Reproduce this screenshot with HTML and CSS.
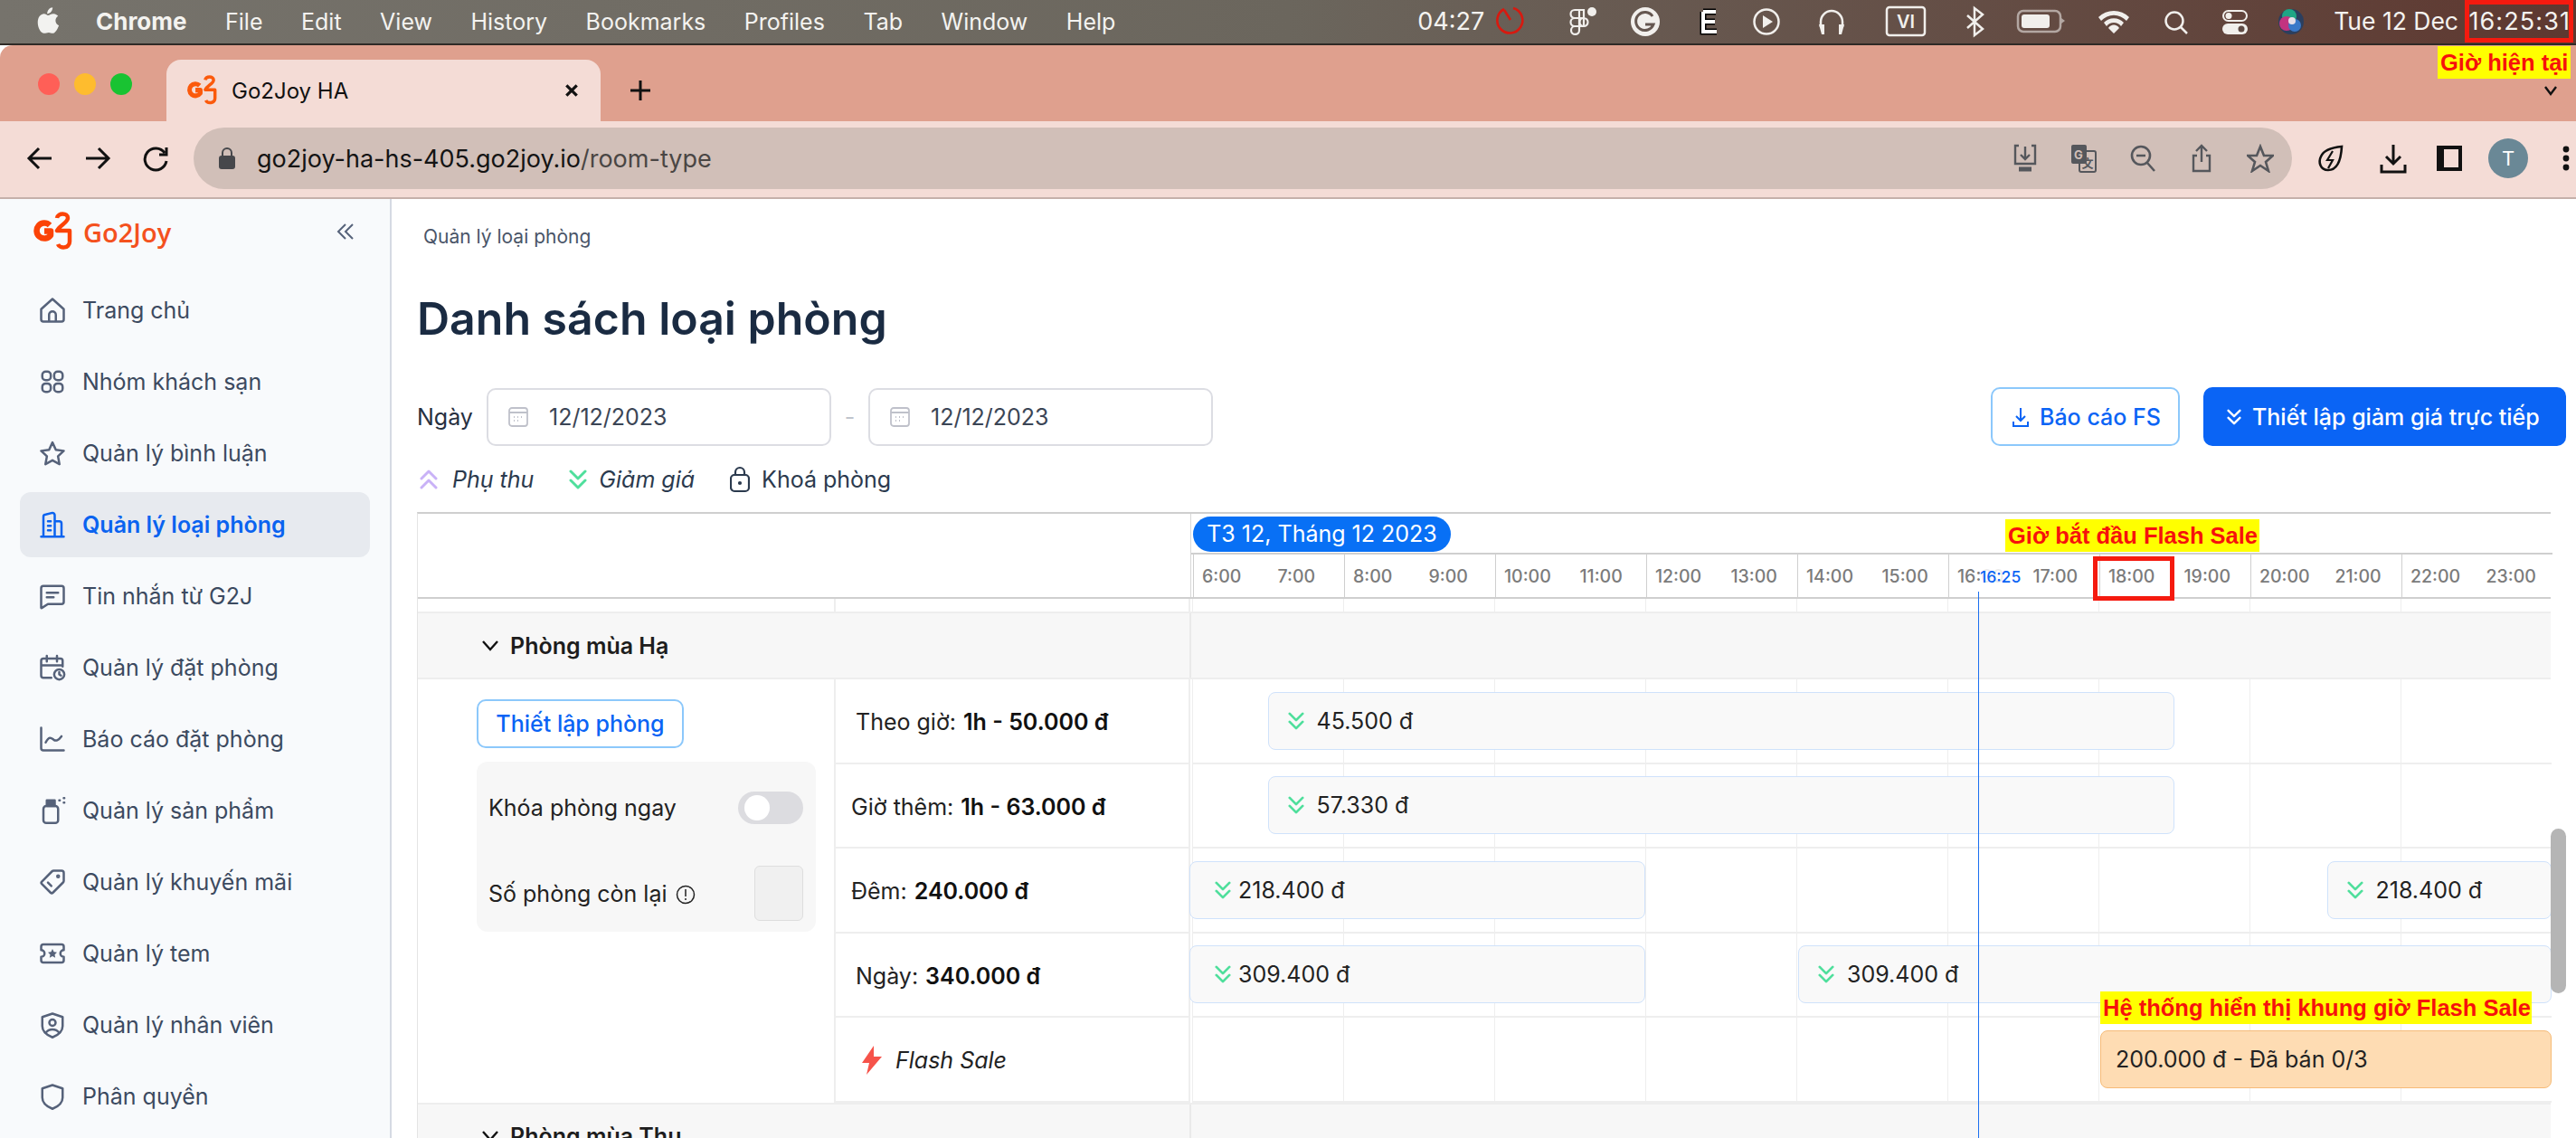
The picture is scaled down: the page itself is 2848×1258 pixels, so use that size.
FILE: index.html
```html
<!DOCTYPE html>
<html lang="en">
<head>
    <meta charset="UTF-8">
    <title>Go2Joy HA</title>
    <link rel="stylesheet" href="styles.css">
</head>
<body>
    <svg class="defs" width="0" height="0">
        <symbol id="down2" viewBox="0 0 20 24"><path d="M2 3l8 8 8-8M2 13l8 8 8-8" fill="none" stroke="currentColor" stroke-width="3" stroke-linecap="round" stroke-linejoin="round"/></symbol>
        <symbol id="g2" viewBox="0 0 44 44">
            <path d="M19 15A8.500 8.500 0 1 0 20 26V21.500H13" fill="none" stroke="currentColor" stroke-width="6.500" stroke-linejoin="round"/>
            <path d="M27 7C28 1 39 1 39 7C39 12 30 15 27 21H41V33C41 41 30 41 28 36" fill="none" stroke="currentColor" stroke-width="4.500" stroke-linejoin="round"/>
        </symbol>
    </svg>

    <div class="menubar">
        <svg class="apple" width="26" height="32" viewBox="0 0 30 36"><path d="M21 1c0 4-3 8-7 8 0-4 3-8 7-8zM15 11c2 0 4-2 7-2 3 0 5 2 6 3-5 3-4 10 1 12-2 5-5 10-8 10-2 0-3-1-5-1s-4 1-6 1C6 34 2 27 2 20c0-7 4-11 8-11 2 0 4 2 5 2z" fill="#f2f2f0"/></svg>
        <nav class="menu">
            <b>Chrome</b><span>File</span><span>Edit</span><span>View</span><span>History</span><span>Bookmarks</span><span>Profiles</span><span>Tab</span><span>Window</span><span>Help</span>
        </nav>
        <div class="tray">
            <span class="tray-clock">04:27</span>
            <svg class="tray-icons" width="905" height="46" viewBox="0 0 905 46" fill="none" stroke="#f1efec" stroke-width="2.500">
                <g stroke="#d8190f" stroke-width="2.600"><path d="M25 9a14 14 0 1 1-10 1M15 11l7 11"/></g>
                <g transform="translate(87 8)" stroke-width="2.200"><circle cx="25" cy="5" r="5" fill="#f1efec" stroke="none"/><path d="M6 3h10v9H6a4.500 4.500 0 0 1 0-9zM6 12h10v9H6a4.500 4.500 0 0 1 0-9zM6 21h5v4.500a4.500 4.500 0 1 1-5-4.500zM11 3v18M16 12a4.500 4.500 0 1 1 0 9 4.500 4.500 0 0 1 0-9z"/></g>
                <g transform="translate(171 24)"><circle r="16" fill="#f1efec" stroke="none"/><path d="M8-6a10 10 0 1 0 1 9H0" stroke="#655750" stroke-width="3"/></g>
                <g transform="translate(233 11)"><path d="M2 2h14M2 2v22h15M2 13h13" stroke="#000" stroke-width="7"/><path d="M2 2h14M2 2v22h15M2 13h13" stroke="#fff" stroke-width="4"/></g>
                <g transform="translate(305 24)"><circle r="13.500"/><path d="M-4-7l11 7-11 7z" fill="#f1efec" stroke="none"/></g>
                <g transform="translate(363 0)"><path d="M2 30V24a12 12 0 0 1 24 0v6"/><path d="M0 27h6v11H3zM22 27h6l-3 11h-3z" fill="#f1efec" stroke="none"/></g>
                <rect x="438" y="8" width="42" height="31" rx="3"/><text x="459" y="31" class="tray-vi">VI</text>
                <path d="M527 17l17 15-9 7V9l9 7-17 15"/>
                <g transform="translate(583 12)"><rect width="47" height="23" rx="6" stroke="#b3a7a2"/><rect x="4" y="4" width="31" height="15" rx="3" fill="#f1efec" stroke="none"/><path d="M48 8l4 3-4 3z" fill="#b3a7a2" stroke="none"/></g>
                <g transform="translate(689 0)" stroke="none" fill="#f1efec"><path d="M-17 19a24 24 0 0 1 34 0l-3 4a19 19 0 0 0-28 0zM-11 25a15 15 0 0 1 22 0l-3 4a10 10 0 0 0-16 0zM-6 31a7 7 0 0 1 12 0l-6 6z"/></g>
                <circle cx="756" cy="23" r="9.500"/><path d="M763 30l7 7"/>
                <g transform="translate(809 11)"><rect x="1" y="1" width="26" height="11" rx="5.500" stroke-width="2"/><circle cx="7" cy="6.500" r="3.500" fill="#f1efec" stroke="none"/><rect y="15" width="28" height="12" rx="6" fill="#f1efec" stroke="none"/><circle cx="21" cy="21" r="3.500" fill="#5f4a44" stroke="none"/></g>
                <g transform="translate(885 24)" stroke="none"><circle r="14" fill="#2b3f5f"/><circle cx="-2" cy="-6" r="8" fill="#1fa585"/><circle cx="-5" cy="2" r="8" fill="#c23480"/><circle cx="4" cy="4" r="7" fill="#3a78c8"/><circle cx="1" cy="-1" r="4" fill="#e6dfe8"/></g>
            </svg>
            <span class="tray-date">Tue 12 Dec</span>
            <span class="tray-time">16:25:31</span>
        </div>
    </div>

    <div class="browser">
        <div class="tabstrip">
            <div class="lights"><i class="red"></i><i class="yellow"></i><i class="green"></i></div>
            <div class="tab">
                <svg class="favicon" width="34" height="34"><use href="#g2"/></svg>
                <span class="tab-title">Go2Joy HA</span>
                <svg width="16" height="16" viewBox="0 0 14 14"><path d="M2 2l10 10M12 2L2 12" stroke="#111" stroke-width="2.800"/></svg>
            </div>
            <svg class="newtab" width="26" height="26" viewBox="0 0 26 26"><path d="M13 2v22M2 13h22" stroke="#111" stroke-width="3"/></svg>
            <svg class="tabmenu" width="16" height="12" viewBox="0 0 16 12"><path d="M2 2l6 8 6-8" fill="none" stroke="#111" stroke-width="2.400"/></svg>
        </div>
        <div class="toolbar">
            <svg width="30" height="30" viewBox="0 0 30 30" fill="none" stroke="#111" stroke-width="3"><path d="M28 15H4M14 4L3 15l11 11"/></svg>
            <svg width="30" height="30" viewBox="0 0 30 30" fill="none" stroke="#111" stroke-width="3"><path d="M2 15h24M16 4l11 11-11 11"/></svg>
            <svg width="30" height="30" viewBox="0 0 30 30" fill="none" stroke="#111" stroke-width="3"><path d="M25 9a12 12 0 1 0 2 9M27 3v8h-8"/></svg>
            <div class="address">
                <svg width="18" height="24" viewBox="0 0 18 24"><rect y="9" width="18" height="15" rx="3" fill="#46474b"/><path d="M4 10V6a5 5 0 0 1 10 0v4" fill="none" stroke="#46474b" stroke-width="2"/></svg>
                <span class="url">go2joy-ha-hs-405.go2joy.io<em>/room-type</em></span>
                <div class="address-icons">
                    <svg width="30" height="32" viewBox="0 0 30 32" fill="none" stroke="#55575c" stroke-width="2.400"><path d="M8 2H4v20h22V2h-4M15 3v13M10 12l5 5 5-5"/><path d="M8 28h14" stroke-width="5"/></svg>
                    <svg width="30" height="32" viewBox="0 0 30 32"><rect x="1" y="1" width="17" height="21" rx="2" fill="#55575c"/><rect x="10" y="8" width="18" height="23" rx="2" fill="none" stroke="#55575c" stroke-width="2"/><text x="9" y="17" class="gt">G</text><text x="19" y="26" class="gt dark">文</text></svg>
                    <svg width="30" height="32" viewBox="0 0 30 32" fill="none" stroke="#55575c" stroke-width="2.600"><circle cx="13" cy="13" r="10"/><path d="M20 21l8 9M8 13h10"/></svg>
                    <svg width="30" height="32" viewBox="0 0 30 32" fill="none" stroke="#55575c" stroke-width="2.400"><path d="M15 20V2M9 8l6-6 6 6M10 13H6v17h18V13h-4"/></svg>
                    <svg width="30" height="32" viewBox="0 0 30 32" fill="none" stroke="#55575c" stroke-width="2.600"><path d="M15 3l4 10h10l-8 7 3 10-9-6-9 6 3-10-8-7h10z"/></svg>
                </div>
            </div>
            <div class="browser-icons">
                <svg width="30" height="32" viewBox="0 0 30 32" fill="none" stroke="#111" stroke-width="2.600"><path d="M27 3c-1 18-6 26-15 26-9 0-11-9-8-15 3-7 12-10 23-11z"/><path d="M17 8l-6 10h6l-5 9" stroke-width="2.200"/></svg>
                <svg width="30" height="34" viewBox="0 0 30 34" fill="none" stroke="#111" stroke-width="3"><path d="M15 2v21M7 15l8 8 8-8M2 24v8h26v-8"/></svg>
                <svg class="panel-icon" width="28" height="28" viewBox="0 0 28 28"><path d="M0 0h28v28H0zM8 4v20h16V4z" fill="#111" fill-rule="evenodd"/></svg>
                <span class="avatar">T</span>
                <svg class="dots" width="8" height="28" viewBox="0 0 8 28"><circle cx="4" cy="4" r="3.400" fill="#111"/><circle cx="4" cy="14" r="3.400" fill="#111"/><circle cx="4" cy="24" r="3.400" fill="#111"/></svg>
            </div>
        </div>
    </div>

    <div class="app">
        <aside class="sidebar">
            <div class="brand">
                <svg class="brand-logo" width="44" height="44"><use href="#g2"/></svg>
                <span class="brand-name">Go2Joy</span>
                <svg class="collapse" width="20" height="20" viewBox="0 0 20 20" fill="none" stroke="#56627a" stroke-width="2"><path d="M10 2L2 10l8 8M18 2l-8 8 8 8"/></svg>
            </div>
            <nav>
                <a class="nav-item"><svg viewBox="0 0 24 24"><path d="M2 11l10-9 10 9v9a2 2 0 0 1-2 2H4a2 2 0 0 1-2-2zM9 22v-6a3 3 0 0 1 6 0v6"/></svg>Trang chủ</a>
                <a class="nav-item"><svg viewBox="0 0 24 24"><rect x="3" y="3" width="7.500" height="7.500" rx="3"/><rect x="13.500" y="3" width="7.500" height="7.500" rx="3"/><rect x="3" y="13.500" width="7.500" height="7.500" rx="3"/><rect x="13.500" y="13.500" width="7.500" height="7.500" rx="3"/></svg>Nhóm khách sạn</a>
                <a class="nav-item"><svg viewBox="0 0 24 24"><path d="M12 2.500l3 6.500 7 .9-5.100 4.800 1.300 7L12 18.300 5.800 21.700l1.300-7L2 9.900l7-.9z"/></svg>Quản lý bình luận</a>
                <a class="nav-item active"><svg viewBox="0 0 24 24"><path d="M2 22.500h20M4 22V5a2 2 0 0 1 2-2l6-1.500c1 0 2 1 2 2V22M14 9h4a2 2 0 0 1 2 2v11M8 9h2.500M8 13h2.500M8 17h2.500"/></svg>Quản lý loại phòng</a>
                <a class="nav-item"><svg viewBox="0 0 24 24"><path d="M4 3h16a2 2 0 0 1 2 2v12a2 2 0 0 1-2 2H8l-5.500 3.500a.4.4 0 0 1-.5-.3V5a2 2 0 0 1 2-2zM7 9h10M7 13h6"/></svg>Tin nhắn từ G2J</a>
                <a class="nav-item"><svg viewBox="0 0 24 24"><path d="M11 21H4a2 2 0 0 1-2-2V6a2 2 0 0 1 2-2h15a2 2 0 0 1 2 2v5M7 1.500v5M16 1.500v5M2 10h19"/><circle cx="18" cy="18" r="4.500"/><path d="M18 16v2l1.500 1"/></svg>Quản lý đặt phòng</a>
                <a class="nav-item"><svg viewBox="0 0 24 24"><path d="M2 2v18a2 2 0 0 0 2 2h18M6 15c3-6 5-4 7-2.500s4 1 7-3"/></svg>Báo cáo đặt phòng</a>
                <a class="nav-item"><svg viewBox="0 0 24 24"><rect x="4" y="8" width="13" height="15" rx="2.500"/><path d="M7 3h7v5H7z" fill="currentColor"/><path d="M18 3h.5M22 1h.5M22 5h.5"/></svg>Quản lý sản phẩm</a>
                <a class="nav-item"><svg viewBox="0 0 24 24"><path d="M13 2h7a2 2 0 0 1 2 2v7a2 2 0 0 1-.6 1.400l-9 9a1.500 1.500 0 0 1-2.100 0L2.600 13.700a1.500 1.500 0 0 1 0-2.100l9-9A2 2 0 0 1 13 2zM8 12.500l3 3"/><circle cx="17" cy="7" r=".8"/></svg>Quản lý khuyến mãi</a>
                <a class="nav-item"><svg viewBox="0 0 24 24"><path d="M4 4h16a2 2 0 0 1 2 2v3a3 3 0 0 0 0 6v3a2 2 0 0 1-2 2H4a2 2 0 0 1-2-2v-3a3 3 0 0 0 0-6V6a2 2 0 0 1 2-2z"/><path d="M12 8l1.300 2.600 2.700.3-2 2 .5 2.800-2.500-1.400-2.500 1.400.5-2.800-2-2 2.700-.3z" fill="currentColor" stroke="none"/></svg>Quản lý tem</a>
                <a class="nav-item"><svg viewBox="0 0 24 24"><path d="M12 2l9 3v8c0 5-4 8-9 10-5-2-9-5-9-10V5z"/><circle cx="12" cy="10" r="2.800"/><path d="M6 19c3-4 9-4 12 0"/></svg>Quản lý nhân viên</a>
                <a class="nav-item"><svg viewBox="0 0 24 24"><path d="M12 2l9 3v8c0 5-4 8-9 10-5-2-9-5-9-10V5z"/></svg>Phân quyền</a>
            </nav>
        </aside>

        <main class="content">
            <div class="breadcrumb">Quản lý loại phòng</div>
            <h1>Danh sách loại phòng</h1>

            <div class="filters">
                <label>Ngày</label>
                <div class="date-input"><svg width="22" height="22" viewBox="0 0 22 22" fill="none" stroke="#bfc1ca" stroke-width="1.800"><rect x="1" y="1" width="20" height="20" rx="3"/><path d="M1 6h20M6 11h1M10 11h1M14 11h1M6 15h1M10 15h1"/></svg>12/12/2023</div>
                <span class="dash">-</span>
                <div class="date-input"><svg width="22" height="22" viewBox="0 0 22 22" fill="none" stroke="#bfc1ca" stroke-width="1.800"><rect x="1" y="1" width="20" height="20" rx="3"/><path d="M1 6h20M6 11h1M10 11h1M14 11h1M6 15h1M10 15h1"/></svg>12/12/2023</div>
                <div class="actions">
                    <button class="btn btn-outline"><svg width="18" height="24" viewBox="0 0 18 24" fill="none" stroke="currentColor" stroke-width="2"><path d="M9 2v14M4 11l5 5 5-5M1 17v5h16v-5"/></svg>Báo cáo FS</button>
                    <button class="btn btn-primary"><svg width="16" height="20"><use href="#down2"/></svg>Thiết lập giảm giá trực tiếp</button>
                </div>
            </div>

            <div class="legend">
                <span class="legend-item up"><svg width="20" height="26" viewBox="0 0 20 24"><path d="M2 11l8-8 8 8M2 21l8-8 8 8" fill="none" stroke="#c9b2f7" stroke-width="3" stroke-linecap="round" stroke-linejoin="round"/></svg><i>Phụ thu</i></span>
                <span class="legend-item"><svg class="green-icon" width="20" height="26"><use href="#down2"/></svg><i>Giảm giá</i></span>
                <span class="legend-item"><svg width="22" height="30" viewBox="0 0 22 30" fill="none" stroke="#2b3a4e" stroke-width="2.200"><rect x="1" y="10" width="20" height="18" rx="4"/><path d="M6 10V7a5 5 0 0 1 10 0v3"/><circle cx="11" cy="19" r="1" fill="#2b3a4e"/></svg>Khoá phòng</span>
            </div>

            <section class="schedule">
                <div class="head">
                    <div class="head-blank"></div>
                    <div class="head-time">
                        <div class="head-date"><span class="date-pill">T3 12, Tháng 12 2023</span></div>
                        <div class="hours" id="hours"></div>
                    </div>
                </div>
                <div class="spacer"><div class="cell-a"></div><div class="cell-b"></div><div class="grid-lines"></div></div>

                <div class="group"><svg width="20" height="14" viewBox="0 0 20 14"><path d="M2 2l8 9 8-9" fill="none" stroke="#111" stroke-width="2.400"/></svg>Phòng mùa Hạ</div>
                <div class="room">
                    <div class="room-info">
                        <button class="btn-setup">Thiết lập phòng</button>
                        <div class="room-panel">
                            <div class="panel-row">Khóa phòng ngay<span class="toggle"><i></i></span></div>
                            <div class="panel-row"><span>Số phòng còn lại <svg class="info" width="22" height="22" viewBox="0 0 22 22" fill="none" stroke="#222" stroke-width="1.500"><circle cx="11" cy="11" r="9.500"/><path d="M11 5v8M11 15v2"/></svg></span><span class="count"></span></div>
                        </div>
                    </div>

                    <div class="rate rate-a">Theo giờ: <b>1h - 50.000 đ</b></div>
                    <div class="track"><div class="bar s7-19"><svg width="18" height="22"><use href="#down2"/></svg>45.500 đ</div></div>

                    <div class="rate">Giờ thêm: <b>1h - 63.000 đ</b></div>
                    <div class="track"><div class="bar s7-19"><svg width="18" height="22"><use href="#down2"/></svg>57.330 đ</div></div>

                    <div class="rate">Đêm: <b>240.000 đ</b></div>
                    <div class="track"><div class="bar s6-12"><svg width="18" height="22"><use href="#down2"/></svg>218.400 đ</div><div class="bar s21-24"><svg width="18" height="22"><use href="#down2"/></svg>218.400 đ</div></div>

                    <div class="rate rate-a">Ngày: <b>340.000 đ</b></div>
                    <div class="track"><div class="bar s6-12"><svg width="18" height="22"><use href="#down2"/></svg>309.400 đ</div><div class="bar s14-24"><svg width="18" height="22"><use href="#down2"/></svg>309.400 đ</div></div>

                    <div class="rate rate-flash"><svg width="24" height="32" viewBox="0 0 24 32"><path d="M14 0L1 19h8l-3 13 17-20h-9z" fill="#f6534a"/></svg><i>Flash Sale</i></div>
                    <div class="track"><div class="bar bar-flash s18-24">200.000 đ - Đã bán 0/3</div></div>
                </div>
                <div class="group"><svg width="20" height="14" viewBox="0 0 20 14"><path d="M2 2l8 9 8-9" fill="none" stroke="#111" stroke-width="2.400"/></svg>Phòng mùa Thu</div>

                <div class="now-line"></div>
                <span class="now-label">16:25</span>
            </section>
        </main>
        <div class="scrollbar"></div>
    </div>

    <span class="note note-now">Giờ hiện tại</span>
    <span class="note note-start">Giờ bắt đầu Flash Sale</span>
    <span class="note note-system">Hệ thống hiển thị khung giờ Flash Sale</span>
    <div class="mark mark-clock"></div>
    <div class="mark mark-hour"></div>

    <script>
        // 6:00 -> 23:00 labels for the timeline header
        let hours = document.getElementById("hours");
        for (let h = 6; h < 24; h++) {
            let label = document.createElement("span");
            label.textContent = h + ":00";
            hours.appendChild(label);
        }
    </script>
</body>
</html>
```

FILE: styles.css
```css
* {
    box-sizing: border-box;
}

html, body {
    margin: 0;
    height: 1258px;
    overflow: hidden;
}

body {
    position: relative;
    font-family: Inter, "Noto Sans", sans-serif;
    background: #fff;
    color: #222;
}

.defs {
    position: absolute;
}

/* mac menu bar */
.menubar {
    height: 50px;
    display: flex;
    align-items: center;
    padding-bottom: 2px;
    background: linear-gradient(90deg, #76736c 0%, #6b665d 50%, #5e3830 100%);
    border-bottom: 2px solid #2f2a26;
    color: #f4f3f0;
    font-size: 25px;
}

.apple {
    margin-left: 40px;
    flex: none;
}

.menu {
    display: flex;
    align-items: baseline;
    gap: 42.5px;
    margin-left: 40px;
}

.menu b {
    font-size: 26px;
    font-weight: 700;
}

.tray {
    margin-left: auto;
    display: flex;
    align-items: center;
    font-size: 27px;
}

.tray-icons {
    margin-left: 7px;
    flex: none;
}

.tray-vi {
    font-size: 20px;
    font-weight: 600;
    fill: #f1efec;
    stroke: none;
    text-anchor: middle;
}

.gt {
    font-size: 13px;
    font-weight: 700;
    fill: #d1bfb8;
    text-anchor: middle;
}

.gt.dark {
    fill: #55575c;
    font-family: "Noto Sans CJK SC", sans-serif;
}

.tray-date {
    margin-left: 27px;
    font-size: 26.5px;
}

.tray-time {
    width: 130px;
    padding-right: 6px;
    text-align: right;
    letter-spacing: 1.1px;
}

/* browser chrome */
.tabstrip {
    height: 84px;
    display: flex;
    align-items: flex-end;
    background: #dfa08e;
    border-radius: 14px 0 0 0;
    position: relative;
}

.lights {
    display: flex;
    gap: 16px;
    align-self: flex-start;
    margin: 31px 0 0 42px;
}

.lights i {
    width: 24px;
    height: 24px;
    border-radius: 50%;
}

.red { background: #ff5f57; }
.yellow { background: #febc2e; }
.green { background: #19c332; }

.tab {
    width: 480px;
    height: 68px;
    margin-left: 38px;
    padding: 0 24px 0 22px;
    display: flex;
    align-items: center;
    background: #f4dcd6;
    border-radius: 16px 16px 0 0;
    color: #111;
}

.favicon {
    color: #fb5a0c;
    margin-right: 16px;
}

.tab-title {
    flex: 1;
    font-size: 24px;
}

.newtab {
    margin: 0 0 21px 31px;
}

.tabmenu {
    position: absolute;
    right: 20px;
    top: 44px;
}

.toolbar {
    height: 86px;
    display: flex;
    align-items: center;
    gap: 34px;
    padding: 0 0 2px 29px;
    background: #f4dcd6;
    border-bottom: 2px solid #c5b0aa;
}

.toolbar > svg {
    flex: none;
}

.address {
    flex: none;
    width: 2320px;
    height: 68px;
    margin-left: -7px;
    padding-left: 28px;
    display: flex;
    align-items: center;
    gap: 24px;
    background: #d1bfb8;
    border-radius: 34px;
}

.url {
    font-size: 27px;
    color: #141414;
}

.url em {
    font-style: normal;
    color: #4a4644;
}

.address-icons {
    margin-left: auto;
    padding-right: 20px;
    display: flex;
    gap: 35px;
}

.browser-icons {
    display: flex;
    align-items: center;
    gap: 39px;
    margin-left: -6px;
}

.panel-icon {
    margin-left: -6px;
}

.avatar {
    width: 44px;
    height: 44px;
    margin-left: -10px;
    border-radius: 50%;
    background: #6a8896;
    color: #fff;
    font-size: 22px;
    display: flex;
    align-items: center;
    justify-content: center;
}

.dots {
    margin-left: -1px;
}

/* app */
.app {
    display: flex;
    height: 1038px;
    position: relative;
    overflow: hidden;
}

.sidebar {
    width: 433px;
    flex: none;
    background: #f8fafc;
    border-right: 2px solid #d5dae3;
    padding: 0 22px;
}

.brand {
    height: 87px;
    padding: 0 0 15px 14px;
    display: flex;
    align-items: center;
}

.brand-logo {
    color: #fb4307;
}

.brand-name {
    margin-left: 12px;
    font-family: "Open Sans", sans-serif;
    font-size: 29px;
    font-weight: 600;
    color: #f4511e;
}

.collapse {
    margin-left: auto;
    margin-right: 17px;
}

.nav-item {
    height: 72px;
    margin-bottom: 7px;
    padding-left: 21px;
    display: flex;
    align-items: center;
    gap: 18px;
    border-radius: 12px;
    font-size: 25px;
    color: #3c4a60;
}

.nav-item svg {
    width: 30px;
    height: 30px;
    fill: none;
    stroke: #56627a;
    stroke-width: 2;
    stroke-linecap: round;
    stroke-linejoin: round;
    color: #56627a;
}

.nav-item.active {
    background: #e7eaef;
    color: #0a63f0;
    font-weight: 600;
}

.nav-item.active svg {
    stroke: #0a63f0;
}

.content {
    flex: 1;
    min-width: 0;
    padding: 28px 11px 0 28px;
}

.breadcrumb {
    height: 28px;
    padding-left: 7px;
    font-size: 21px;
    line-height: 28px;
    color: #4a5568;
}

h1 {
    height: 60px;
    margin: 46px 0 0;
    font-size: 50px;
    line-height: 60px;
    font-weight: 600;
    color: #1a2b42;
}

.filters {
    height: 65px;
    margin-top: 46px;
    display: flex;
    align-items: center;
    font-size: 25px;
    color: #27303f;
}

.filters label {
    width: 77px;
}

.date-input {
    width: 381px;
    height: 64px;
    padding-left: 22px;
    display: flex;
    align-items: center;
    gap: 23px;
    border: 2px solid #dcdde3;
    border-radius: 10px;
    color: #3b4555;
}

.dash {
    width: 41px;
    text-align: center;
    color: #bfc4cc;
}

.actions {
    margin-left: auto;
    display: flex;
    gap: 26px;
}

.btn {
    height: 65px;
    display: flex;
    align-items: center;
    gap: 12px;
    border-radius: 10px;
    font: 500 25px Inter, sans-serif;
}

.btn-outline {
    width: 209px;
    padding-left: 22px;
    background: #fff;
    border: 2px solid #8cc8fb;
    color: #0a64f5;
}

.btn-primary {
    width: 401px;
    padding-left: 26px;
    background: #0a64f5;
    border: none;
    color: #fff;
}

.legend {
    height: 36px;
    margin-top: 19px;
    padding-left: 3px;
    display: flex;
    gap: 39px;
    font-size: 25px;
    color: #2b3a4e;
}

.legend-item {
    display: flex;
    align-items: center;
    gap: 13px;
}

.legend .up {
    gap: 16px;
}

.green-icon {
    color: #4fdf9c;
}

/* schedule table */
.schedule {
    position: relative;
    margin-top: 18px;
    width: 2359px;
    border-top: 2px solid #cfcfcf;
    border-left: 1px solid #e4e4e4;
}

.head {
    display: flex;
    height: 94px;
    border-bottom: 2px solid #cfcfcf;
}

.head-blank {
    width: 854px;
    flex: none;
}

.head-time {
    flex: 1;
    border-left: 1px solid #d8d8d8;
}

.head-date {
    height: 45px;
    padding: 3px 0 0 2px;
    border-bottom: 2px solid #cfcfcf;
}

.date-pill {
    display: inline-block;
    width: 285px;
    height: 39px;
    border-radius: 20px;
    background: #0870f5;
    color: #fff;
    font-size: 25px;
    line-height: 39px;
    text-align: center;
}

.hours {
    height: 47px;
    margin-left: 2px;
    display: grid;
    grid-template-columns: repeat(18, 83.5px);
    background: repeating-linear-gradient(90deg, #cfcfcf 0 1px, transparent 1px 167px);
}

.hours span {
    padding-left: 10px;
    font-size: 19.5px;
    font-weight: 500;
    line-height: 48px;
    color: #7b7b7b;
}

.spacer {
    height: 14px;
    display: flex;
}

.cell-a {
    width: 462px;
    flex: none;
    border-right: 2px solid #eee;
}

.cell-b {
    width: 392px;
    flex: none;
    border-right: 2px solid #eee;
}

.grid-lines {
    flex: 1;
    margin-left: 2px;
    background: repeating-linear-gradient(90deg, #eee 0 1px, transparent 1px 167px);
}

.group {
    height: 75px;
    padding-left: 70px;
    display: flex;
    align-items: center;
    gap: 12px;
    background: linear-gradient(#e9e9e9, #e9e9e9) 853px 0 / 2px 100% no-repeat, #f7f7f7;
    border-top: 2px solid #eee;
    border-bottom: 2px solid #eee;
    font-size: 25px;
    font-weight: 600;
    color: #1d1d1d;
}

.room {
    display: grid;
    grid-template-columns: 462px 392px 1fr;
    grid-template-rows: repeat(5, 93.5px);
}

.room-info {
    grid-row: 1 / 6;
    padding: 22px 20px 0 65px;
    border-right: 2px solid #eee;
}

.btn-setup {
    display: block;
    width: 229px;
    height: 54px;
    background: #fff;
    border: 2px solid #8cc8fb;
    border-radius: 10px;
    font: 500 25px Inter, sans-serif;
    color: #0a64f5;
}

.room-panel {
    margin-top: 15px;
    height: 188px;
    padding: 3px 14px 0 13px;
    background: #f7f7f7;
    border-radius: 12px;
}

.panel-row {
    height: 95px;
    display: flex;
    align-items: center;
    justify-content: space-between;
    font-size: 25px;
    color: #222;
}

.panel-row .info {
    vertical-align: -3px;
    margin-left: 2px;
}

.toggle {
    width: 72px;
    height: 36px;
    padding: 4px 7px;
    background: #dcdce0;
    border-radius: 18px;
}

.toggle i {
    display: block;
    width: 28px;
    height: 28px;
    border-radius: 50%;
    background: #fff;
}

.count {
    width: 54px;
    height: 61px;
    background: #f0f0f0;
    border: 1px solid #dedede;
    border-radius: 6px;
}

.rate {
    padding: 3px 0 0 17px;
    display: flex;
    align-items: center;
    gap: 8px;
    border-bottom: 2px solid #eee;
    border-right: 2px solid #eee;
    font-size: 25px;
    color: #222;
}

.rate-a {
    padding-left: 22px;
}

.rate b {
    font-weight: 600;
    color: #111;
}

.rate-flash {
    padding-left: 28px;
    gap: 14px;
}

.track {
    margin-left: 2px;
    display: grid;
    grid-template-columns: repeat(18, 83.5px);
    align-items: center;
    border-bottom: 2px solid #eee;
    background: repeating-linear-gradient(90deg, #eee 0 1px, transparent 1px 167px);
}

.bar {
    height: 64px;
    padding-left: 21px;
    display: flex;
    align-items: center;
    gap: 14px;
    background: #f9f9f9;
    border: 1.5px solid #cfe2fb;
    border-radius: 8px;
    font-size: 25px;
    color: #222;
}

.bar svg {
    color: #4fdf9c;
}

.s7-19 { grid-column: 2 / 14; }
.s6-12 { grid-column: 1 / 7; margin-left: -3px; padding-left: 27px; gap: 8px; }
.s21-24 { grid-column: 16 / 19; margin-left: 2px; }
.s14-24 { grid-column: 9 / 19; margin-left: 2px; }
.s18-24 { grid-column: 13 / 19; margin-left: 2px; }

.bar-flash {
    padding-left: 16px;
    background: #fedcb3;
    border-color: #f6bb78;
}

.now-line {
    position: absolute;
    left: 1725px;
    top: 86px;
    bottom: 0;
    width: 1px;
    background: #1a6ff0;
}

.now-label {
    position: absolute;
    left: 1727px;
    top: 58px;
    padding: 0 3px 0 0;
    background: rgba(255, 255, 255, 0.85);
    font-size: 17.5px;
    font-weight: 500;
    line-height: 24px;
    color: #0a64f5;
}

.scrollbar {
    position: absolute;
    left: 2820px;
    top: 696px;
    width: 17px;
    height: 182px;
    border-radius: 9px;
    background: #b5b5b5;
}

/* red / yellow notes drawn over the screenshot */
.note {
    position: absolute;
    height: 36px;
    padding: 0 3px;
    background: #ff0;
    color: #f6120c;
    font-family: "Liberation Sans", Arial, sans-serif;
    font-size: 25.5px;
    font-weight: 700;
    line-height: 36px;
    white-space: nowrap;
}

.note-now { left: 2695px; top: 51px; width: 147px; }
.note-start { left: 2217px; top: 574px; width: 281px; }
.note-system { left: 2322px; top: 1096px; width: 477px; }

.mark {
    position: absolute;
    border: 5px solid #f51a0f;
}

.mark-clock { left: 2725px; top: 0; width: 120px; height: 47px; }
.mark-hour { left: 2314px; top: 615px; width: 90px; height: 49px; }
```
